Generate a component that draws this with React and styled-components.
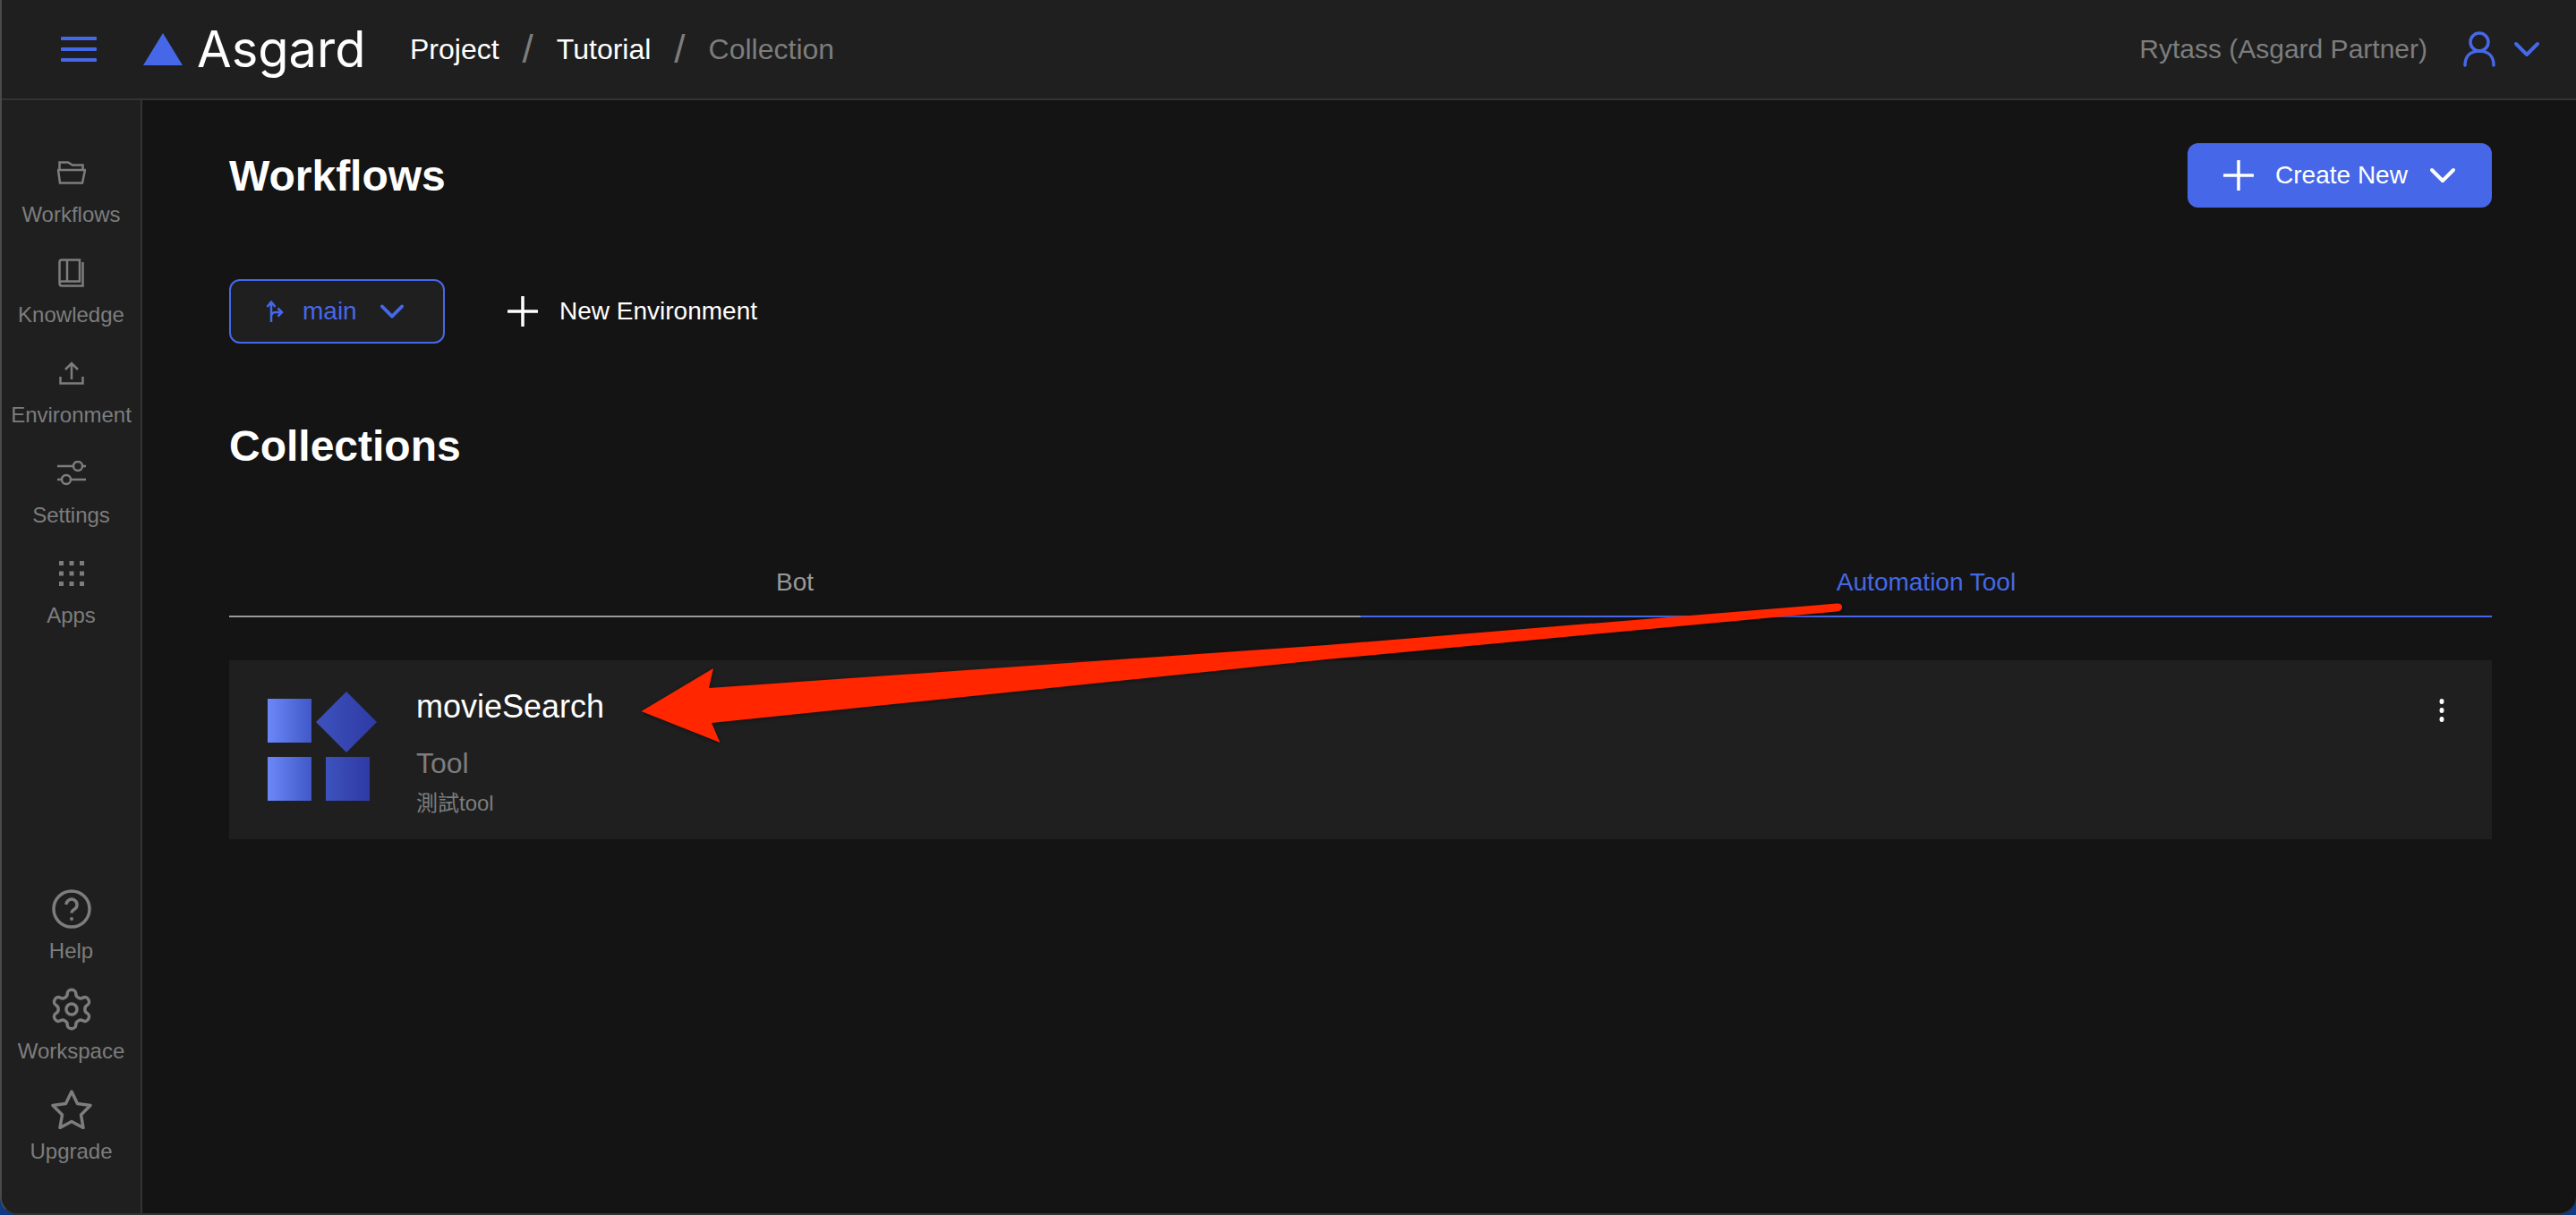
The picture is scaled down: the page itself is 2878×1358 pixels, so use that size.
import React from 'react';
import styled, { createGlobalStyle } from 'styled-components';

const Global = createGlobalStyle`
  html, body { margin: 0; padding: 0; background: #0f3a86; }
  * { box-sizing: border-box; }
`;
const BLUE = '#4668e8';
const Window = styled.div`
  position: relative; width: 2878px; height: 1358px; overflow: hidden;
  display: flex; flex-direction: column; background: #141414;
  border-left: 2px solid #4a4a4a; border-bottom: 2px solid #333; border-radius: 0 0 20px 20px;
  font-family: "Liberation Sans", "Noto Sans CJK TC", sans-serif;
`;
const Topbar = styled.header`
  height: 112px; flex: none; display: flex; align-items: center; background: #1f1f1f;
  border-bottom: 2px solid #333; padding: 0 40px 0 66px;
`;
const Logo = styled.div`display: flex; align-items: center; margin-left: 52px; width: 298px;`;
const LogoName = styled.span`
  font-family: Inter, sans-serif; font-size: 56px; color: #fff; margin-left: 16px; line-height: 60px;
`;
const Crumb = styled.span`font-size: 32px; color: ${p => p.$muted ? '#7d7d7d' : '#fff'};`;
const Slash = styled.span`font-size: 44px; color: #7d7d7d; margin: 0 26px;`;
const Spacer = styled.div`flex: 1;`;
const Account = styled.span`font-size: 30px; color: #7d7d7d; margin-right: 40px;`;
const UserChevron = styled.span`margin-left: 20px; display: flex;`;
const Body = styled.div`flex: 1; display: flex; min-height: 0;`;
const Side = styled.nav`
  width: 157px; flex: none; background: #1f1f1f; border-right: 2px solid #333;
  display: flex; flex-direction: column; padding: 55px 0 54px;
`;
const SideGroup = styled.div`display: flex; flex-direction: column; gap: 24px;`;
const SideItem = styled.div`
  height: 88px; display: flex; flex-direction: column; align-items: center; justify-content: space-between; color: #7d7d7d;
`;
const SideIcon = styled.div`height: 52px; display: flex; align-items: center; justify-content: center;`;
const SideLabel = styled.span`font-size: 24px; line-height: 30px; white-space: nowrap; color: #7d7d7d;`;
const Main = styled.main`flex: 1; padding: 48px 94px 0 97px; display: flex; flex-direction: column;`;
const TitleRow = styled.div`display: flex; align-items: center; justify-content: space-between; height: 72px;`;
const Title = styled.h1`margin: 0; font-size: 48px; font-weight: 700; color: #fff;`;
const CreateButton = styled.button`
  width: 340px; height: 72px; background: ${BLUE}; border: 0; border-radius: 12px; color: #fff;
  font: 28px "Liberation Sans", sans-serif; display: flex; align-items: center; justify-content: center; gap: 24px;
`;
const EnvRow = styled.div`display: flex; align-items: center; margin-top: 80px; height: 72px;`;
const EnvSelect = styled.div`
  width: 241px; height: 72px; border: 2px solid ${BLUE}; border-radius: 12px; background: #1f1f1f; color: ${BLUE};
  font-size: 28px; display: flex; align-items: center; padding-left: 39px;
`;
const EnvLabel = styled.span`margin: 0 25px 0 21px;`;
const NewEnv = styled.div`display: flex; align-items: center; gap: 24px; color: #fff; font-size: 28px; margin-left: 70px;`;
const SubTitle = styled(Title)`margin-top: 89px; line-height: 52px;`;
const Tabs = styled.div`display: flex; margin-top: 85px;`;
const Tab = styled.div`
  flex: 1; height: 80px; padding-top: 4px; display: flex; align-items: center; justify-content: center;
  font-size: 28px; color: ${p => p.$active ? BLUE : '#9a9a9a'};
  border-bottom: 2px solid ${p => p.$active ? BLUE : '#9a9a9a'};
`;
const Card = styled.section`
  position: relative; height: 200px; margin-top: 48px; background: #1f1f1f; display: flex; padding: 0 43px;
`;
const CardIcon = styled.svg`width: 122px; height: 136px; margin-top: 35px; flex: none;`;
const CardText = styled.div`margin-left: 44px; display: flex; flex-direction: column; padding-top: 32px;`;
const CardName = styled.div`font-size: 36px; color: #fff; line-height: 40px;`;
const CardKind = styled.div`font-size: 32px; color: #7d7d7d; line-height: 38px; margin-top: 24px;`;
const CardDesc = styled.div`font-size: 24px; color: #7d7d7d; line-height: 28px; margin-top: 12px;`;
const Dots = styled.svg`position: absolute; right: 53px; top: 43px;`;
const Arrow = styled.svg`position: absolute; left: 0; top: 0; pointer-events: none; filter: drop-shadow(0 1px 2px rgba(0,0,0,.45));`;

const Chevron = ({ size = 30, w = 4, color = 'currentColor' }) => (
  <svg width={size} height={size} viewBox="0 0 30 30" fill="none" stroke={color} strokeWidth={w} strokeLinecap="round" strokeLinejoin="round"><path d="M3 9l12 12L27 9" /></svg>
);
const Plus = ({ size = 34 }) => (
  <svg width={size} height={size} viewBox="0 0 34 34" fill="none" stroke="#fff" strokeWidth="3.5" strokeLinecap="round"><path d="M17 1v32M1 17h32" /></svg>
);
const ic = { fill: 'none', stroke: '#7d7d7d', strokeWidth: 2.5 };
const icons = {
  folder: <svg width="32" height="26" viewBox="0 0 32 26" {...ic}><path d="M2.500 10V1.500h9.500l5 3h11.500V10M1 10h30l-3 14.500H3z" /></svg>,
  book: <svg width="29" height="32" viewBox="0 0 29 32" {...ic}><path d="M4 1.500h20v24H4q-2.500 0-2.500 2V4q0-2.500 2.500-2.500zM10 1.500v24M27.500 4v26.500H4q-2.500 0-2.500-3" /></svg>,
  upload: <svg width="28" height="26" viewBox="0 0 28 26" {...ic}><path d="M1.500 17v7.500h25V17M14 20V2.500M7 9l7-7 7 7" /></svg>,
  settings: <svg width="32" height="28" viewBox="0 0 32 28" {...ic}><path d="M0 6h18M28 6h4M0 21h5M15 21h17" /><circle cx="23" cy="6" r="5" /><circle cx="10" cy="21" r="5" /></svg>,
  apps: <svg width="28" height="28" viewBox="0 0 28 28" fill="#7d7d7d">{[0,1,2].flatMap(r => [0,1,2].map(c => <rect key={`${r}${c}`} x={c*11.500} y={r*11.500} width="5" height="5" />))}</svg>,
  help: <svg width="44" height="44" viewBox="0 0 44 44" {...ic} strokeWidth="3.5"><circle cx="22" cy="22" r="20" /><path d="M16 17a6 6 0 1 1 9.500 5c-2.500 1.500-3.500 2.500-3.500 4.500" /><circle cx="22" cy="33" r="2" fill="#7d7d7d" stroke="none" /></svg>,
  gear: <svg width="52" height="52" viewBox="0 0 24 24" {...ic} strokeWidth="1.6"><path d="M12.220 2h-.44a2 2 0 0 0-2 2v.18a2 2 0 0 1-1 1.730l-.43.25a2 2 0 0 1-2 0l-.15-.08a2 2 0 0 0-2.730.73l-.22.38a2 2 0 0 0 .73 2.730l.15.1a2 2 0 0 1 1 1.720v.51a2 2 0 0 1-1 1.740l-.15.09a2 2 0 0 0-.73 2.730l.22.38a2 2 0 0 0 2.730.73l.15-.08a2 2 0 0 1 2 0l.43.25a2 2 0 0 1 1 1.730V20a2 2 0 0 0 2 2h.44a2 2 0 0 0 2-2v-.18a2 2 0 0 1 1-1.730l.43-.25a2 2 0 0 1 2 0l.15.08a2 2 0 0 0 2.730-.73l.22-.39a2 2 0 0 0-.73-2.730l-.15-.08a2 2 0 0 1-1-1.740v-.5a2 2 0 0 1 1-1.740l.15-.09a2 2 0 0 0 .73-2.730l-.22-.38a2 2 0 0 0-2.730-.73l-.15.08a2 2 0 0 1-2 0l-.43-.25a2 2 0 0 1-1-1.730V4a2 2 0 0 0-2-2z" /><circle cx="12" cy="12" r="2.800" /></svg>,
  star: <svg width="46" height="44" viewBox="0 0 46 44" {...ic} strokeWidth="3.5" strokeLinejoin="round"><path d="M23 2l6.500 13.500L44 17.500 33.500 28l2.500 14.500L23 35.500 10 42.500 12.500 28 2 17.500l14.500-2z" /></svg>,
};
const topItems = [['folder','Workflows'],['book','Knowledge'],['upload','Environment'],['settings','Settings'],['apps','Apps']];
const bottomItems = [['help','Help'],['gear','Workspace'],['star','Upgrade']];

const SideEntry = ({ icon, label }) => (
  <SideItem><SideIcon>{icons[icon]}</SideIcon><SideLabel>{label}</SideLabel></SideItem>
);

export default function App() {
  return (
    <Window>
      <Global />
      <Topbar>
        <svg width="40" height="28" viewBox="0 0 40 28" fill={BLUE}><rect width="40" height="4" rx="1"/><rect y="12" width="40" height="4" rx="1"/><rect y="24" width="40" height="4" rx="1"/></svg>
        <Logo>
          <svg width="44" height="36" viewBox="0 0 44 36" fill={BLUE}><path d="M22 0l22 36H0z" /></svg>
          <LogoName>Asgard</LogoName>
        </Logo>
        <Crumb>Project</Crumb><Slash>/</Slash><Crumb>Tutorial</Crumb><Slash>/</Slash><Crumb $muted>Collection</Crumb>
        <Spacer />
        <Account>Rytass (Asgard Partner)</Account>
        <svg width="36" height="40" viewBox="0 0 36 40" fill="none" stroke={BLUE} strokeWidth="3.500" strokeLinecap="round"><circle cx="18" cy="12" r="10"/><path d="M2 38c0-10 6-16 16-16s16 6 16 16"/></svg>
        <UserChevron><Chevron color={BLUE} size={30} /></UserChevron>
      </Topbar>
      <Body>
        <Side>
          <SideGroup>{topItems.map(([i, l]) => <SideEntry key={l} icon={i} label={l} />)}</SideGroup>
          <Spacer />
          <SideGroup>{bottomItems.map(([i, l]) => <SideEntry key={l} icon={i} label={l} />)}</SideGroup>
        </Side>
        <Main>
          <TitleRow>
            <Title>Workflows</Title>
            <CreateButton><Plus /><span>Create New</span><Chevron size={30} /></CreateButton>
          </TitleRow>
          <EnvRow>
            <EnvSelect>
              <svg width="20" height="24" viewBox="0 0 20 24" fill="none" stroke={BLUE} strokeWidth="2.500"><path d="M6 24V1.500M1.500 7L6 1.500 10.500 7M6 18q0-5 5-5h7M13.500 8.500L18 13l-4.500 4.500" /></svg>
              <EnvLabel>main</EnvLabel>
              <Chevron size={28} />
            </EnvSelect>
            <NewEnv><Plus /><span>New Environment</span></NewEnv>
          </EnvRow>
          <SubTitle>Collections</SubTitle>
          <Tabs><Tab>Bot</Tab><Tab $active>Automation Tool</Tab></Tabs>
          <Card>
            <CardIcon viewBox="0 0 122 136">
              <defs>
                <linearGradient id="g1" x1="0" x2="1" y1="0" y2="0"><stop offset="0" stopColor="#6c88f8"/><stop offset="1" stopColor="#4058c8"/></linearGradient>
                <linearGradient id="g2" x1="0" x2="1" y1="0" y2="0"><stop offset="0" stopColor="#3d52bd"/><stop offset="1" stopColor="#2f3aa5"/></linearGradient>
              </defs>
              <rect x="0" y="8" width="49" height="49" fill="url(#g1)"/>
              <path d="M88 0l34 34-34 34-34-34z" fill="url(#g2)" />
              <rect x="0" y="73" width="49" height="49" fill="url(#g1)"/>
              <rect x="65" y="73" width="49" height="49" fill="url(#g2)"/>
            </CardIcon>
            <CardText>
              <CardName>movieSearch</CardName>
              <CardKind>Tool</CardKind>
              <CardDesc>測試tool</CardDesc>
            </CardText>
            <Dots width="6" height="26" viewBox="0 0 6 26" fill="#fff"><ellipse cx="3" cy="3" rx="2.500" ry="3"/><ellipse cx="3" cy="13" rx="2.500" ry="3"/><ellipse cx="3" cy="23" rx="2.500" ry="3"/></Dots>
          </Card>
        </Main>
      </Body>
      <Arrow width="2878" height="1358" viewBox="0 0 2878 1358">
        <path d="M2050 674.500 Q2056 674 2056 678.500 Q2056 683 2050 683.500 L1480 737 L793 808 L802.500 830 L714.500 795 L795 747 L790 769 L1480 721z" fill="#ff2600" />
      </Arrow>
    </Window>
  );
}
